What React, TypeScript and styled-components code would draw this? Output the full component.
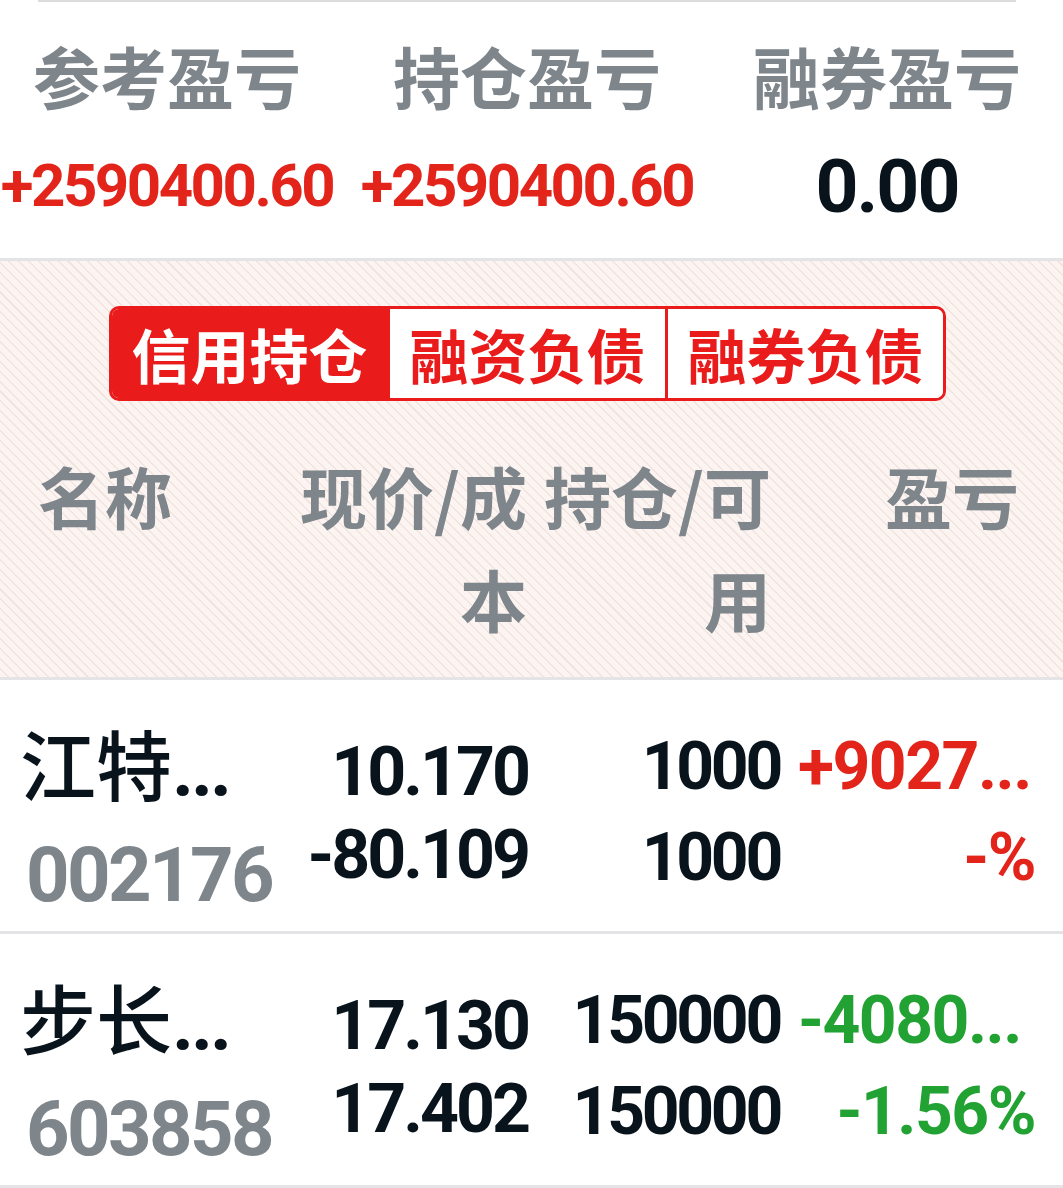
import React from 'react';
import styled, { createGlobalStyle } from 'styled-components';

const CJK = `"Noto Sans CJK SC", "Noto Sans", sans-serif`;
const NUM = `Roboto, "Noto Sans CJK SC", sans-serif`;

const GRAY = '#7e858b';
const INK = '#08131c';
const RED = '#e3241b';
const GREEN = '#22a232';
const BRAND = '#e91b1b';
const LINE = '#e4e4e7';

type Tone = 'up' | 'down' | 'flat';

const toneColor = (tone: Tone) =>
  tone === 'up' ? RED : tone === 'down' ? GREEN : INK;

const summary: { label: string; value: string; tone: Tone }[] = [
  { label: '参考盈亏', value: '+2590400.60', tone: 'up' },
  { label: '持仓盈亏', value: '+2590400.60', tone: 'up' },
  { label: '融券盈亏', value: '0.00', tone: 'flat' },
];

const tabs = ['信用持仓', '融资负债', '融券负债'];

const positions: {
  name: string;
  code: string;
  price: string;
  cost: string;
  hold: string;
  avail: string;
  pnl: string;
  ratio: string;
  tone: Tone;
}[] = [
  {
    name: '江特',
    code: '002176',
    price: '10.170',
    cost: '-80.109',
    hold: '1000',
    avail: '1000',
    pnl: '+9027...',
    ratio: '-%',
    tone: 'up',
  },
  {
    name: '步长',
    code: '603858',
    price: '17.130',
    cost: '17.402',
    hold: '150000',
    avail: '150000',
    pnl: '-4080...',
    ratio: '-1.56%',
    tone: 'down',
  },
];

function App() {
  return (
    <Page>
      <GlobalStyle />
      <TopLine />
      <Summary>
        {summary.map((item) => (
          <SumCell key={item.label}>
            <SumLabel>{item.label}</SumLabel>
            <SumValue $tone={item.tone}>{item.value}</SumValue>
          </SumCell>
        ))}
      </Summary>

      <Banner>
        <Tabs>
          {tabs.map((tab, i) => (
            <Tab key={tab} $active={i === 0}>
              {tab}
            </Tab>
          ))}
        </Tabs>
        <Header>
          <HeadCell $align="left">名称</HeadCell>
          <HeadCell>现价/成本</HeadCell>
          <HeadCell>持仓/可用</HeadCell>
          <HeadCell>盈亏</HeadCell>
        </Header>
      </Banner>

      {positions.map((p) => (
        <Row key={p.code}>
          <NameCell>
            <StockName>
              {p.name}
              <Dots>...</Dots>
            </StockName>
            <StockCode>{p.code}</StockCode>
          </NameCell>
          <PriceCell>
            <div>{p.price}</div>
            <div>{p.cost}</div>
          </PriceCell>
          <HoldCell>
            <div>{p.hold}</div>
            <div>{p.avail}</div>
          </HoldCell>
          <PnlCell $tone={p.tone}>
            <PnlAmount>{p.pnl}</PnlAmount>
            <PnlRatio>{p.ratio}</PnlRatio>
          </PnlCell>
        </Row>
      ))}
    </Page>
  );
}

export default App;

const GlobalStyle = createGlobalStyle`
  html, body {
    margin: 0;
    padding: 0;
    background: #fff;
    overflow: hidden;
  }
  * {
    box-sizing: border-box;
  }
`;

const Page = styled.div`
  width: 1063px;
  font-family: ${CJK};
`;

const TopLine = styled.div`
  height: 2px;
  width: 978px;
  margin-left: 38px;
  background: #dcdcdc;
`;

const Summary = styled.section`
  display: grid;
  grid-template-columns: repeat(3, 360px);
  margin-left: -13px;
  padding: 40px 0 27px;
  border-bottom: 3px solid ${LINE};
`;

const SumCell = styled.div`
  display: flex;
  flex-direction: column;
  align-items: center;
`;

const SumLabel = styled.div`
  font-family: ${CJK};
  font-size: 67px;
  line-height: 66px;
  font-weight: 700;
  color: ${GRAY};
  white-space: nowrap;
`;

const SumValue = styled.div<{ $tone: Tone }>`
  margin-top: 33px;
  font-family: ${NUM};
  font-weight: 700;
  font-size: ${(p) => (p.$tone === 'flat' ? '75px' : '60px')};
  letter-spacing: ${(p) => (p.$tone === 'flat' ? '-2px' : '-2.5px')};
  line-height: 90px;
  color: ${(p) => toneColor(p.$tone)};
  white-space: nowrap;
`;

const Banner = styled.section`
  padding: 45px 0 28px;
  border-bottom: 3px solid ${LINE};
  background-color: #fcf4f1;
  background-image: repeating-linear-gradient(
    45deg,
    transparent 0 5.5px,
    #f2e4e0 5.5px 7px
  );
`;

const Tabs = styled.div`
  display: flex;
  width: 837px;
  height: 95px;
  margin-left: 109px;
  border: 3px solid ${BRAND};
  border-radius: 10px;
  overflow: hidden;
  background: #fff;
`;

const Tab = styled.div<{ $active: boolean }>`
  flex: 1;
  display: flex;
  align-items: center;
  justify-content: center;
  font-family: ${CJK};
  font-size: 59px;
  font-weight: 700;
  line-height: 1;
  color: ${(p) => (p.$active ? '#fff' : BRAND)};
  background: ${(p) => (p.$active ? BRAND : '#fff')};
  & + & {
    border-left: 3px solid ${BRAND};
  }
`;

const Header = styled.div`
  display: grid;
  grid-template-columns: 239px 250px 244px 248px;
  align-items: start;
  margin-top: 42px;
  padding-left: 38px;
`;

const HeadCell = styled.div<{ $align?: 'left' | 'right' }>`
  font-family: ${CJK};
  font-size: 67px;
  font-weight: 700;
  line-height: 103px;
  color: ${GRAY};
  text-align: ${(p) => p.$align || 'right'};
`;

const Row = styled.div`
  display: grid;
  grid-template-columns: 270px 238px 252px 255px;
  align-items: start;
  height: 254px;
  padding-left: 20px;
  border-bottom: 3px solid ${LINE};
`;

const NameCell = styled.div`
  padding-top: 42px;
`;

const StockName = styled.div`
  font-family: ${CJK};
  font-size: 76px;
  font-weight: 500;
  line-height: 80px;
  color: ${INK};
  white-space: nowrap;
`;

const Dots = styled.span`
  font-family: ${NUM};
  font-weight: 700;
  letter-spacing: -3px;
`;

const StockCode = styled.div`
  margin-top: 26px;
  padding-left: 6px;
  font-family: ${NUM};
  font-size: 76px;
  font-weight: 700;
  letter-spacing: -2.6px;
  line-height: 80px;
  color: ${GRAY};
`;

const PriceCell = styled.div`
  padding-top: 51px;
  font-family: ${NUM};
  font-size: 68px;
  font-weight: 700;
  letter-spacing: -3px;
  line-height: 82.5px;
  color: ${INK};
  text-align: right;
  white-space: nowrap;
`;

const HoldCell = styled.div`
  padding-top: 41px;
  font-family: ${NUM};
  font-size: 66px;
  font-weight: 700;
  letter-spacing: -3.3px;
  line-height: 91px;
  color: ${INK};
  text-align: right;
  white-space: nowrap;
`;

const PnlCell = styled.div<{ $tone: Tone }>`
  padding-top: 41px;
  font-family: ${NUM};
  font-size: 66px;
  font-weight: 700;
  letter-spacing: -1.5px;
  line-height: 91px;
  color: ${(p) => toneColor(p.$tone)};
  white-space: nowrap;
`;

const PnlAmount = styled.div`
  padding-left: 18px;
`;

const PnlRatio = styled.div`
  text-align: right;
`;
